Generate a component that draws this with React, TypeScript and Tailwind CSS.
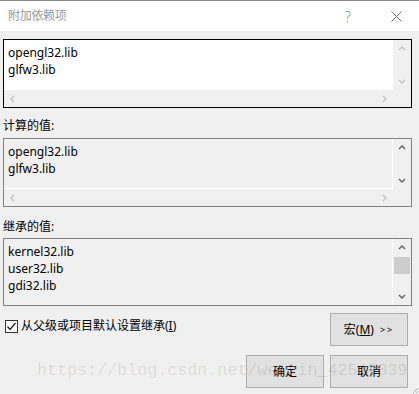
import type { ReactNode } from "react";

const font = { fontFamily: '"Noto Sans", "Noto Sans CJK SC", sans-serif' };

const Chevron = ({ dir, color }: { dir: "up" | "down" | "left" | "right"; color: string }) => {
  const pts = {
    up: "1,5 4,2 7,5",
    down: "1,2 4,5 7,2",
    left: "5,1 2,4 5,7",
    right: "2,1 5,4 2,7",
  }[dir];
  return (
    <svg width="8" height="8" viewBox="0 0 8 8" className="block">
      <polyline points={pts} fill="none" stroke={color} strokeWidth="1.4" />
    </svg>
  );
};

interface ListBoxProps {
  lines: string[];
  height: string;
  focused?: boolean;
  hScroll?: boolean;
  thumb?: boolean;
  vArrow: string;
}

const ListBox = ({ lines, height, focused, hScroll, thumb, vArrow }: ListBoxProps) => {
  const light = "#c2c2c2";
  return (
    <div
      className={`flex flex-col border ${focused ? "border-black bg-white" : "border-[#828282] bg-[#f0f0f0]"} ${height}`}
    >
      <div className="flex flex-1 min-h-0">
        <div
          className={`flex-1 pl-[4px] pt-[4px] text-[12px] leading-[17px] text-black ${
            focused ? "" : `border-r border-white ${hScroll ? "border-b" : ""}`
          }`}
        >
          {lines.map((l) => (
            <div key={l}>{l}</div>
          ))}
        </div>
        <div className="w-[18px] bg-[#f0f0f0] flex flex-col">
          <div className="h-[17px] flex items-center justify-center">
            <Chevron dir="up" color={vArrow} />
          </div>
          <div className="flex-1">
            {thumb && <div className="mt-px h-[17px] mx-px bg-[#cdcdcd]" />}
          </div>
          <div className="h-[17px] flex items-center justify-center">
            <Chevron dir="down" color={vArrow} />
          </div>
        </div>
      </div>
      {hScroll && (
        <div className="h-[17px] flex bg-[#f0f0f0]">
          <div className="w-[17px] flex items-center justify-center">
            <Chevron dir="left" color={light} />
          </div>
          <div className="flex-1" />
          <div className="w-[17px] flex items-center justify-center">
            <Chevron dir="right" color={light} />
          </div>
          <div className="w-[18px]" />
        </div>
      )}
    </div>
  );
};

const Button = ({ children, className = "" }: { children: ReactNode; className?: string }) => (
  <div
    className={`w-[78px] h-[33px] flex items-center justify-center bg-[#e1e1e1] border border-[#adadad] text-[12px] text-black ${className}`}
  >
    {children}
  </div>
);

const App = () => {
  return (
    <div className="relative w-[419px] h-[394px] bg-[#f0f0f0] overflow-hidden" style={font}>
      {/* title bar */}
      <div className="h-[31px] bg-white border-t border-[#8a8a8a] flex items-center pl-[8px] pr-[17px]">
        <span className="text-[12px] text-[#9a9a9a] flex-1 tracking-[-0.3px]">附加依赖项</span>
        <span className="text-[14px] text-[#8a8a8a] font-light mr-[40px]">?</span>
        <svg width="11" height="11" viewBox="0 0 11 11">
          <path d="M0.5 0.5 L10.5 10.5 M10.5 0.5 L0.5 10.5" stroke="#6e6e6e" strokeWidth="1" />
        </svg>
      </div>

      <div className="pl-[3px] pr-[7px]">
        <div className="mt-[8px]">
          <ListBox lines={["opengl32.lib", "glfw3.lib"]} height="h-[69px]" focused hScroll vArrow="#c2c2c2" />
        </div>

        <div className="mt-[10px] mb-[4px] h-[16px] leading-[16px] text-[12px] text-black">计算的值:</div>
        <ListBox lines={["opengl32.lib", "glfw3.lib"]} height="h-[69px]" hScroll vArrow="#606060" />

        <div className="mt-[12px] mb-[3px] h-[16px] leading-[16px] text-[12px] text-black">继承的值:</div>
        <ListBox lines={["kernel32.lib", "user32.lib", "gdi32.lib"]} height="h-[68px]" thumb vArrow="#606060" />

        <div className="mt-[7px] mr-[4px] flex justify-between items-start">
          <div className="mt-[5px] ml-[2px] flex items-center gap-[3px]">
            <div className="w-[13px] h-[13px] border border-[#333] bg-white flex items-center justify-center">
              <svg width="11" height="11" viewBox="0 0 11 11">
                <polyline points="1.5,5.5 4,8.5 9.5,2" fill="none" stroke="#222" strokeWidth="1.3" />
              </svg>
            </div>
            <span className="text-[12px] leading-[16px] text-black">
              从父级或项目默认设置继承(<span className="underline">I</span>)
            </span>
          </div>
          <Button>
            宏(<span className="underline">M</span>)<span className="ml-[6px] text-[9px] tracking-[2px]">&gt;&gt;</span>
          </Button>
        </div>

        <div className="mt-[9px] mr-[4px] flex justify-end gap-[6px]">
          <Button>确定</Button>
          <Button>取消</Button>
        </div>
      </div>

      {/* watermark */}
      <div
        className="absolute left-[37px] top-[360px] text-[16.7px] leading-[22px] text-black/[0.1] pointer-events-none whitespace-nowrap"
        style={{ fontFamily: '"Liberation Mono", monospace' }}
      >
        https://blog.csdn.net/weixin_42518839
      </div>

      {/* resize grip */}
      <svg className="absolute right-0 bottom-0" width="7" height="7" viewBox="0 0 7 7">
        <path d="M6 1 L1 6 M6 4 L4 6" stroke="#b0b0b0" strokeWidth="1" />
      </svg>
    </div>
  );
};

export default App;
